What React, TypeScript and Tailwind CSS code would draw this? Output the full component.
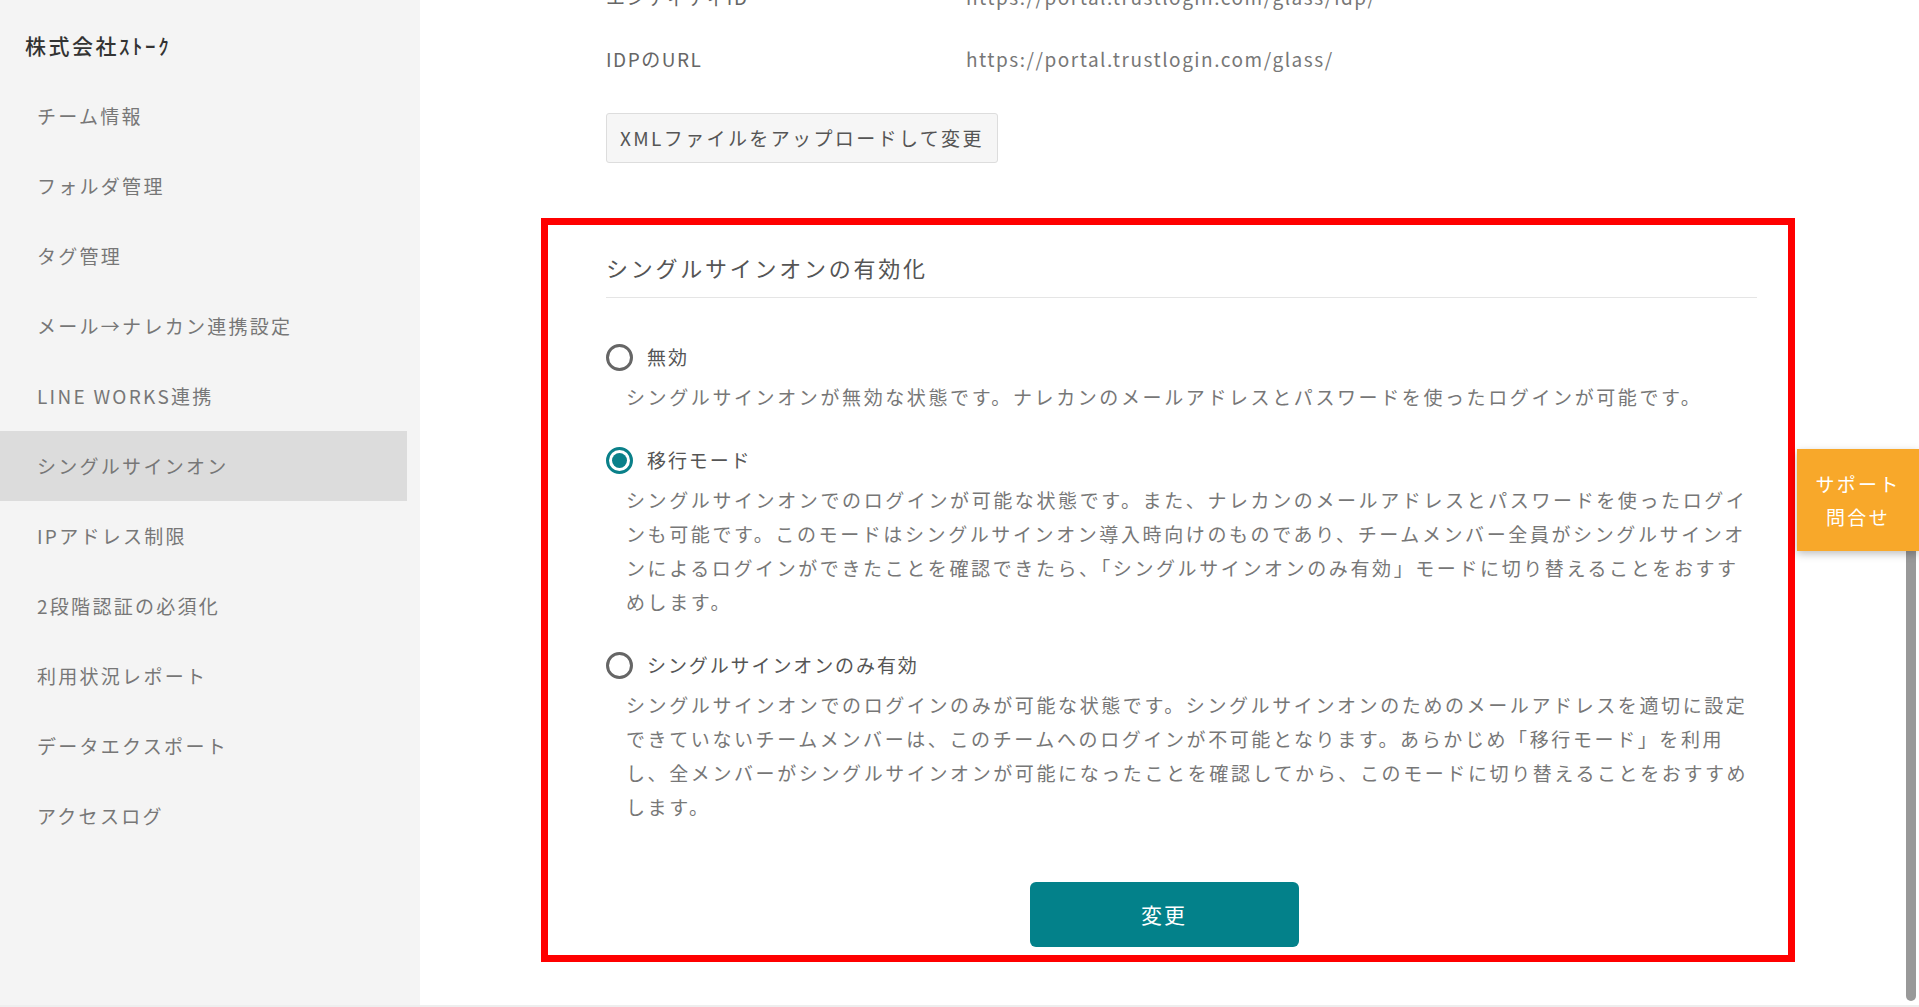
import React, { useState } from "react";

const menuItems = [
  "チーム情報",
  "フォルダ管理",
  "タグ管理",
  "メール→ナレカン連携設定",
  "LINE WORKS連携",
  "シングルサインオン",
  "IPアドレス制限",
  "2段階認証の必須化",
  "利用状況レポート",
  "データエクスポート",
  "アクセスログ",
];

const options = [
  {
    id: "off",
    label: "無効",
    lines: [
      "シングルサインオンが無効な状態です。ナレカンのメールアドレスとパスワードを使ったログインが可能です。",
    ],
  },
  {
    id: "migrate",
    label: "移行モード",
    lines: [
      "シングルサインオンでのログインが可能な状態です。また、ナレカンのメールアドレスとパスワードを使ったログイ",
      "ンも可能です。このモードはシングルサインオン導入時向けのものであり、チームメンバー全員がシングルサインオ",
      "ンによるログインができたことを確認できたら、「シングルサインオンのみ有効」モードに切り替えることをおすす",
      "めします。",
    ],
  },
  {
    id: "only",
    label: "シングルサインオンのみ有効",
    lines: [
      "シングルサインオンでのログインのみが可能な状態です。シングルサインオンのためのメールアドレスを適切に設定",
      "できていないチームメンバーは、このチームへのログインが不可能となります。あらかじめ「移行モード」を利用",
      "し、全メンバーがシングルサインオンが可能になったことを確認してから、このモードに切り替えることをおすすめ",
      "します。",
    ],
  },
];

const Sidebar: React.FunctionComponent<any> = () => {
  return (
    <aside className="w-[420px] shrink-0 bg-[#f4f4f4] pt-[29px]">
      <div className="pl-[25px] text-[21px] leading-[32px] tracking-[0.12em] font-medium text-[#333] mb-[20px]">
        株式会社ｽﾄｰｸ
      </div>
      <nav>
        {menuItems.map((item) => (
          <div
            key={item}
            className={
              item === "シングルサインオン"
                ? "w-[407px] h-[70px] flex items-center pl-[37px] bg-[#dcdcdc] text-[19px] tracking-[0.12em] text-[#777]"
                : "w-[407px] h-[70px] flex items-center pl-[37px] text-[19px] tracking-[0.12em] text-[#777]"
            }
          >
            {item}
          </div>
        ))}
      </nav>
    </aside>
  );
};

const Radio: React.FunctionComponent<any> = ({ checked }) => {
  return checked ? (
    <span className="w-[27px] h-[27px] rounded-full border-[3px] border-[#0a8089] flex items-center justify-center shrink-0">
      <span className="w-[15px] h-[15px] rounded-full bg-[#0a8089]" />
    </span>
  ) : (
    <span className="w-[27px] h-[27px] rounded-full border-[3px] border-[#666] shrink-0" />
  );
};

const SsoSection: React.FunctionComponent<any> = () => {
  const [mode, setMode] = useState("migrate");

  return (
    <section className="w-[1254px] border-[7px] border-[#ff0000] pl-[58px] pr-[31px] pt-[26px] pb-[8px]">
      <h2 className="text-[22px] leading-[32px] tracking-[0.125em] text-[#555] pb-[14px] border-b border-[#e5e5e5]">
        シングルサインオンの有効化
      </h2>
      <div className="pt-[44px]">
        {options.map((opt) => (
          <div key={opt.id} className="mb-[31px]">
            <label
              className="flex items-center gap-[14px] h-[30px] cursor-pointer"
              onClick={() => setMode(opt.id)}
            >
              <Radio checked={mode === opt.id} />
              <span className="text-[19px] tracking-[0.1em] text-[#555]">{opt.label}</span>
            </label>
            <p className="mt-[8px] pl-[20px] text-[19px] leading-[34px] tracking-[0.137em] text-[#777] whitespace-nowrap">
              {opt.lines.map((line, i) => (
                <React.Fragment key={i}>
                  {line}
                  {i < opt.lines.length - 1 && <br />}
                </React.Fragment>
              ))}
            </p>
          </div>
        ))}
      </div>
      <div className="flex justify-center pt-[27px] pr-[35px]">
        <button className="w-[269px] h-[65px] rounded-[6px] bg-[#03818a] text-white text-[21px] tracking-[0.1em]">
          変更
        </button>
      </div>
    </section>
  );
};

export default function App() {
  return (
    <div className="relative flex h-[1007px] overflow-hidden bg-white font-['Noto_Sans_CJK_JP','Noto_Sans',sans-serif] border-b-2 border-[#eeeeee]">
      <Sidebar />
      <main className="flex-1 pl-[121px] -mt-[18px]">
        <div className="pl-[65px]">
          <div className="flex h-[30px] items-center text-[19px] tracking-[0.08em]">
            <span className="w-[360px] text-[#666]">エンティティID</span>
            <span className="text-[#777]">https://portal.trustlogin.com/glass/idp/</span>
          </div>
          <div className="flex h-[30px] mt-[32px] items-center text-[19px] tracking-[0.08em]">
            <span className="w-[360px] text-[#666]">IDPのURL</span>
            <span className="text-[#777]">https://portal.trustlogin.com/glass/</span>
          </div>
          <button className="mt-[39px] h-[50px] px-[13px] border border-[#dddddd] rounded-[3px] bg-[#f6f6f6] text-[19px] tracking-[0.125em] text-[#555]">
            XMLファイルをアップロードして変更
          </button>
        </div>
        <div className="mt-[55px]">
          <SsoSection />
        </div>
      </main>

      {/* support tab */}
      <div className="absolute left-[1797px] top-[449px] w-[122px] h-[102px] bg-[#f8a82a] shadow-[0_3px_8px_rgba(0,0,0,0.25)] flex flex-col items-center justify-center text-white text-[19px] leading-[33px] tracking-[0.12em] z-10">
        <span>サポート</span>
        <span>問合せ</span>
      </div>
      {/* scrollbar thumb */}
      <div className="absolute right-[3px] top-[530px] bottom-[4px] w-[10px] rounded-full bg-[#999999]" />
    </div>
  );
}
